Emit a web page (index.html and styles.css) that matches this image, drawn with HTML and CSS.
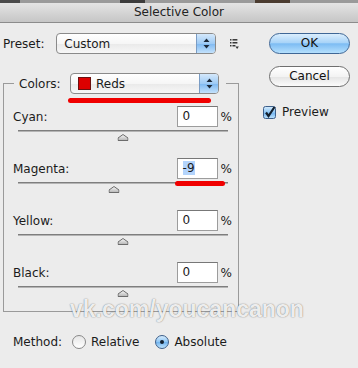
FILE: index.html
```html
<!DOCTYPE html>
<html lang="en">
<head>
    <meta charset="UTF-8">
    <title>Selective Color</title>
    <link rel="stylesheet" href="styles.css">
</head>
<body>
    <div class="strip"></div>
    <div class="titlebar">Selective Color</div>

    <svg width="0" height="0" class="defs">
        <defs>
            <linearGradient id="thumb-grad" x1="0" y1="0" x2="0" y2="1">
                <stop offset="0" stop-color="#fafafa"/>
                <stop offset="1" stop-color="#b4b4b4"/>
            </linearGradient>
            <symbol id="thumb" viewBox="0 0 11 7">
                <path d="M5.5 0.5 L10.5 4 L10.5 6.5 L0.5 6.5 L0.5 4 Z" fill="url(#thumb-grad)" stroke="#6c6c6c"/>
            </symbol>
        </defs>
    </svg>

    <div class="main">
        <!-- colonne gauche -->
        <div class="left">
            <div class="preset-row">
                <span class="preset-label">Preset:</span>
                <div class="popup popup-preset">
                    <span class="popup-text">Custom</span>
                    <span class="stepper">
                        <svg width="7" height="11" viewBox="0 0 7 11"><path d="M3.5 0.5 L6.5 4 L0.5 4 Z M0.5 7 L6.5 7 L3.5 10.5 Z" fill="#1d2a3a"/></svg>
                    </span>
                </div>
                <svg class="menu-icon" width="9" height="10" viewBox="0 0 9 10">
                    <rect x="0" y="0" width="1.5" height="1.5" fill="#333"/>
                    <rect x="2.5" y="0" width="5" height="1.5" fill="#333"/>
                    <rect x="0" y="3" width="1.5" height="1.5" fill="#333"/>
                    <rect x="2.5" y="3" width="5" height="1.5" fill="#333"/>
                    <rect x="0" y="6" width="1.5" height="1.5" fill="#333"/>
                    <rect x="2.5" y="6" width="3" height="1.5" fill="#333"/>
                    <path d="M5.5 7.5 L9 7.5 L7.25 10 Z" fill="#333"/>
                </svg>
            </div>

            <fieldset class="colors">
                <legend class="colors-legend">
                    <span class="legend-label">Colors:</span>
                    <span class="popup popup-colors">
                        <span class="swatch"></span>
                        <span class="popup-text">Reds</span>
                        <span class="stepper">
                            <svg width="7" height="11" viewBox="0 0 7 11"><path d="M3.5 0.5 L6.5 4 L0.5 4 Z M0.5 7 L6.5 7 L3.5 10.5 Z" fill="#1d2a3a"/></svg>
                        </span>
                    </span>
                </legend>

                <div class="channels">
                    <div class="channel">
                        <div class="channel-row">
                            <span class="channel-label">Cyan:</span>
                            <span class="field">0</span>
                            <span class="pct">%</span>
                        </div>
                        <div class="slider"><svg class="thumb" style="left: 50%"><use href="#thumb"/></svg></div>
                    </div>
                    <div class="channel">
                        <div class="channel-row">
                            <span class="channel-label">Magenta:</span>
                            <span class="field"><span class="selected">-9</span></span>
                            <span class="pct">%</span>
                        </div>
                        <div class="slider"><svg class="thumb" style="left: 45.5%"><use href="#thumb"/></svg></div>
                    </div>
                    <div class="channel">
                        <div class="channel-row">
                            <span class="channel-label">Yellow:</span>
                            <span class="field">0</span>
                            <span class="pct">%</span>
                        </div>
                        <div class="slider"><svg class="thumb" style="left: 50%"><use href="#thumb"/></svg></div>
                    </div>
                    <div class="channel">
                        <div class="channel-row">
                            <span class="channel-label">Black:</span>
                            <span class="field">0</span>
                            <span class="pct">%</span>
                        </div>
                        <div class="slider"><svg class="thumb" style="left: 50%"><use href="#thumb"/></svg></div>
                    </div>
                </div>
            </fieldset>

            <div class="method-row">
                <span class="method-label">Method:</span>
                <span class="radio"></span>
                <span class="radio-text">Relative</span>
                <span class="radio radio-on"><span class="dot"></span></span>
                <span class="radio-text">Absolute</span>
            </div>
        </div>

        <!-- colonne droite -->
        <div class="right">
            <div class="aqua aqua-blue">OK</div>
            <div class="aqua">Cancel</div>
            <div class="preview-row">
                <svg class="checkbox" width="13" height="13" viewBox="0 0 13 13">
                    <defs>
                        <linearGradient id="cb" x1="0" y1="0" x2="0" y2="1">
                            <stop offset="0" stop-color="#d6ecfd"/>
                            <stop offset="0.5" stop-color="#8cc5f4"/>
                            <stop offset="0.51" stop-color="#6fb2ee"/>
                            <stop offset="1" stop-color="#bfe3fc"/>
                        </linearGradient>
                    </defs>
                    <rect x="0.5" y="0.5" width="12" height="12" rx="2" fill="url(#cb)" stroke="#3d5f8a"/>
                    <path d="M3 6.5 L5.5 10 L11.5 1" fill="none" stroke="#14202e" stroke-width="2.2"/>
                </svg>
                <span>Preview</span>
            </div>
        </div>
    </div>

    <!-- annotations -->
    <div class="mark mark-colors"></div>
    <div class="mark mark-magenta"></div>
    <div class="watermark">vk.com/youcancanon</div>
</body>
</html>
```

FILE: styles.css
```css
body {
    margin: 0;
    width: 358px;
    height: 368px;
    background-color: #ececec;
    font-family: "DejaVu Sans", sans-serif;
    font-size: 12px;
    color: #1b1b1b;
    position: relative;
    overflow: hidden;
}
.defs {
    position: absolute;
}
.strip {
    height: 3px;
    background: linear-gradient(90deg, #4a4a4a 0, #4a4a4a 20px, #9a9a9a 20px, #9a9a9a 120px, #3c3c3c 120px, #3c3c3c 145px, #9a9a9a 145px, #9a9a9a 255px, #4b3c30 255px, #4b3c30 290px, #9a9a9a 290px);
}
.titlebar {
    height: 19px;
    line-height: 19px;
    text-align: center;
    background: linear-gradient(#e4e4e4, #c6c6c6);
    border-bottom: 1px solid #8c8c8c;
    color: #222;
}
.main {
    display: flex;
    padding: 10px 0 0 3px;
}
.left {
    width: 236px;
}
.preset-row {
    display: flex;
    align-items: center;
    height: 21px;
}
.preset-label {
    width: 54px;
}
.popup {
    display: flex;
    align-items: center;
    box-sizing: border-box;
    height: 21px;
    border: 1px solid #8a8a8a;
    border-radius: 4px;
    background: linear-gradient(#ffffff, #f6f6f6 50%, #e9e9e9 51%, #f7f7f7);
    overflow: hidden;
}
.popup-preset {
    width: 162px;
}
.popup-colors {
    width: 149px;
}
.popup-text {
    flex: 1;
    padding-left: 7px;
}
.swatch {
    width: 13px;
    height: 13px;
    margin-left: 7px;
    background-color: #dd0000;
    border: 1px solid #6a1010;
    box-sizing: border-box;
}
.popup-colors .popup-text {
    padding-left: 5px;
}
.stepper {
    align-self: stretch;
    width: 18px;
    display: flex;
    align-items: center;
    justify-content: center;
    border-left: 1px solid #7a9cc4;
    background: linear-gradient(#d4e8fb, #9fcbf5 50%, #7db8f1 51%, #c3e2fc);
}
.menu-icon {
    margin-left: 14px;
    margin-top: 1px;
}
.colors {
    margin: 19px 0 0 0;
    padding: 0;
    border: 1px solid #9a9a9a;
    min-width: 0;
}
.colors-legend {
    display: flex;
    align-items: center;
    margin-left: 10px;
    padding: 0 7px 0 5px;
}
.legend-label {
    width: 51px;
}
.channels {
    display: flex;
    flex-direction: column;
    gap: 18px;
    padding: 12px 0 15px 0;
}
.channel-row {
    display: flex;
    align-items: center;
    height: 21px;
    padding: 0 6px 0 9px;
}
.channel-label {
    flex: 1;
}
.field {
    box-sizing: border-box;
    width: 41px;
    height: 21px;
    line-height: 19px;
    padding-left: 5px;
    background-color: white;
    border: 1px solid #9c9c9c;
    border-top-color: #777;
}
.selected {
    background-color: #b3d4fc;
}
.pct {
    margin-left: 3px;
}
.slider {
    position: relative;
    height: 1px;
    margin: 3px 10px 8px 14px;
    border-top: 1px solid #7e7e7e;
    background-color: #b4b4b4;
}
.thumb {
    position: absolute;
    top: 3px;
    width: 11px;
    height: 7px;
    transform: translateX(-50%);
}
.method-row {
    display: flex;
    align-items: center;
    margin-top: 22px;
    padding-left: 10px;
    height: 16px;
}
.method-label {
    width: 59px;
}
.radio {
    box-sizing: border-box;
    width: 14px;
    height: 14px;
    border-radius: 50%;
    border: 1px solid #888;
    background: linear-gradient(#e6e6e6, #ffffff);
    display: flex;
    align-items: center;
    justify-content: center;
}
.radio-on {
    border-color: #3d5f8a;
    background: linear-gradient(#d6ecfd, #8cc5f4 50%, #6fb2ee 51%, #bfe3fc);
    margin-left: 16px;
}
.dot {
    width: 4px;
    height: 4px;
    border-radius: 50%;
    background-color: #14202e;
}
.radio-text {
    margin-left: 5px;
}
.right {
    margin-left: 23px;
    display: flex;
    flex-direction: column;
}
.aqua {
    box-sizing: border-box;
    width: 81px;
    height: 21px;
    margin-left: 7px;
    margin-bottom: 12px;
    border: 1px solid #6f6f6f;
    border-radius: 11px;
    text-align: center;
    line-height: 19px;
    background: linear-gradient(#ffffff, #f3f3f3 50%, #e4e4e4 51%, #fbfbfb);
    color: #111;
}
.aqua-blue {
    border-color: #3f6796;
    background: linear-gradient(#dbeefd, #a9d4f8 45%, #7dbcf3 52%, #b5e0fd);
}
.preview-row {
    display: flex;
    align-items: center;
    margin-top: 6px;
    margin-left: 1px;
}
.preview-row span {
    margin-left: 6px;
}
.mark {
    position: absolute;
    background-color: #f00000;
    border-radius: 3px;
}
.mark-colors {
    left: 68px;
    top: 98px;
    width: 143px;
    height: 5px;
}
.mark-magenta {
    left: 175px;
    top: 181px;
    width: 50px;
    height: 5px;
}
.watermark {
    position: absolute;
    left: 70px;
    top: 298px;
    font-family: "Liberation Sans", Arial, sans-serif;
    font-weight: bold;
    font-size: 23px;
    line-height: 23px;
    color: rgba(255, 255, 255, 0.9);
    text-shadow: 0 0 1px rgba(0, 0, 0, 0.45), 0 0 2px rgba(0, 0, 0, 0.2);
}
```
